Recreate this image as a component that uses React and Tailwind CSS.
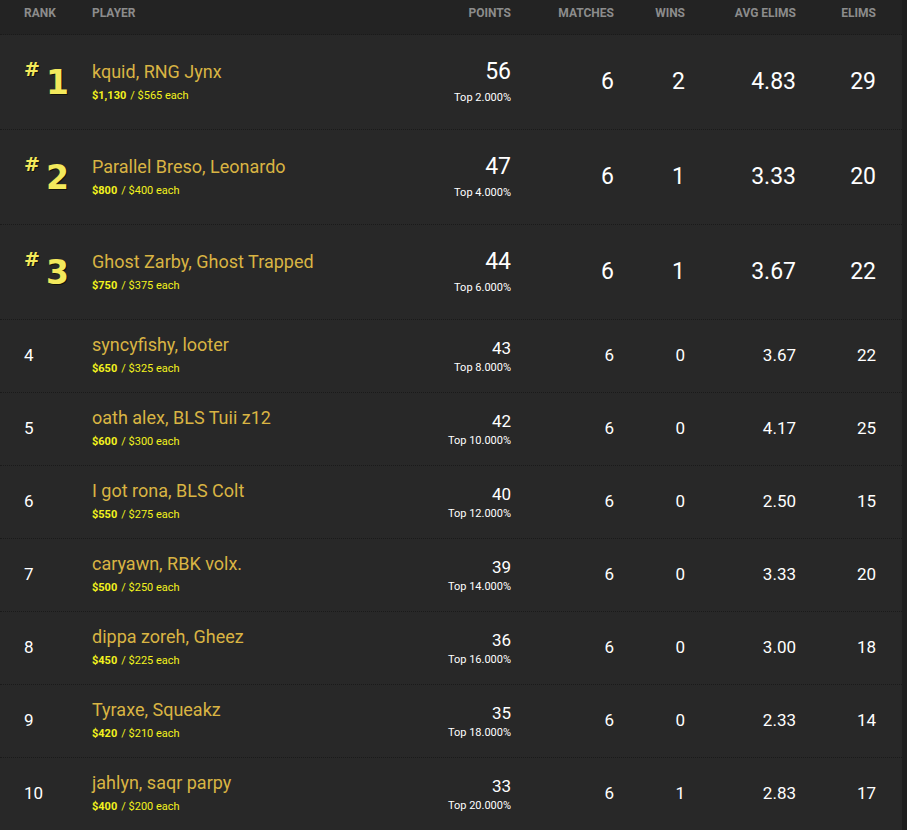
// App.jsx — tournament leaderboard table

const rows = [
  { rank: 1, names: 'kquid, RNG Jynx', total: '$1,130', each: '$565', points: 56, top: '2.000', matches: 6, wins: 2, avg: '4.83', elims: 29 },
  { rank: 2, names: 'Parallel Breso, Leonardo', total: '$800', each: '$400', points: 47, top: '4.000', matches: 6, wins: 1, avg: '3.33', elims: 20 },
  { rank: 3, names: 'Ghost Zarby, Ghost Trapped', total: '$750', each: '$375', points: 44, top: '6.000', matches: 6, wins: 1, avg: '3.67', elims: 22 },
  { rank: 4, names: 'syncyfishy, looter', total: '$650', each: '$325', points: 43, top: '8.000', matches: 6, wins: 0, avg: '3.67', elims: 22 },
  { rank: 5, names: 'oath alex, BLS Tuii z12', total: '$600', each: '$300', points: 42, top: '10.000', matches: 6, wins: 0, avg: '4.17', elims: 25 },
  { rank: 6, names: 'I got rona, BLS Colt', total: '$550', each: '$275', points: 40, top: '12.000', matches: 6, wins: 0, avg: '2.50', elims: 15 },
  { rank: 7, names: 'caryawn, RBK volx.', total: '$500', each: '$250', points: 39, top: '14.000', matches: 6, wins: 0, avg: '3.33', elims: 20 },
  { rank: 8, names: 'dippa zoreh, Gheez', total: '$450', each: '$225', points: 36, top: '16.000', matches: 6, wins: 0, avg: '3.00', elims: 18 },
  { rank: 9, names: 'Tyraxe, Squeakz', total: '$420', each: '$210', points: 35, top: '18.000', matches: 6, wins: 0, avg: '2.33', elims: 14 },
  { rank: 10, names: 'jahlyn, saqr parpy', total: '$400', each: '$200', points: 33, top: '20.000', matches: 6, wins: 1, avg: '2.83', elims: 17 },
]

const cols = 'grid grid-cols-[92px_1fr_111px_103px_71px_111px_80px] pr-[26px]'

function Row({ r }) {
  const podium = r.rank <= 3
  const num = podium ? 'text-[23px]' : 'text-[17px]'

  return (
    <div className={`${cols} items-center border-b border-dotted border-[#1a1a1a] ${podium ? 'h-[95px]' : 'h-[73px]'}`}>

      {/* Rank */}
      <div className="pl-6">
        {podium ? (
          <div className="flex items-start text-[#f3e95c] font-bold leading-none [font-family:'DejaVu_Sans',sans-serif] [text-shadow:1px_1px_0_#14140a]">
            <span className="text-[19px] mt-[-6px]">#</span>
            <span className="text-[33px] ml-[6px]">{r.rank}</span>
          </div>
        ) : (
          <span className="text-white text-[17px]">{r.rank}</span>
        )}
      </div>

      {/* Player + prize */}
      <div className={podium ? 'mt-[1px]' : 'mt-[0px]'}>
        <div className="text-[#d9b443] text-[18px] leading-[22px]">{r.names}</div>
        <div className="text-[#f2f21e] text-[11px] mt-[5px]">
          <span className="font-bold">{r.total}</span>
          <span className="ml-[4px]">/ {r.each} each</span>
        </div>
      </div>

      {/* Points */}
      <div className={`text-right ${podium ? 'mt-[0px]' : 'mt-[2px]'}`}>
        <div className={`text-white ${num} leading-tight`}>{r.points}</div>
        <div className={`text-white text-[11px] ${podium ? 'mt-[3px]' : 'mt-[1px]'}`}>Top {r.top}%</div>
      </div>

      <div className={`text-right text-white ${num}`}>{r.matches}</div>
      <div className={`text-right text-white ${num}`}>{r.wins}</div>
      <div className={`text-right text-white ${num}`}>{r.avg}</div>
      <div className={`text-right text-white ${num}`}>{r.elims}</div>
    </div>
  )
}

export default function App() {
  return (
    <div className="w-[907px] h-[830px] overflow-hidden bg-[#1e1e1e] [font-family:Roboto,'Liberation_Sans',sans-serif]">
      <div className="w-[902px] bg-[#282828]">

        {/* ── Header ─────────────────────────── */}
        <div className={`${cols} h-[35px] bg-[#232323] border-b border-dotted border-[#1a1a1a] text-[12px] font-bold text-[#8c8c8c] uppercase pt-[4px]`}>
          <div className="pl-6">Rank</div>
          <div>Player</div>
          <div className="text-right">Points</div>
          <div className="text-right">Matches</div>
          <div className="text-right">Wins</div>
          <div className="text-right">Avg Elims</div>
          <div className="text-right">Elims</div>
        </div>

        {rows.map(r => <Row key={r.rank} r={r} />)}
      </div>
    </div>
  )
}
